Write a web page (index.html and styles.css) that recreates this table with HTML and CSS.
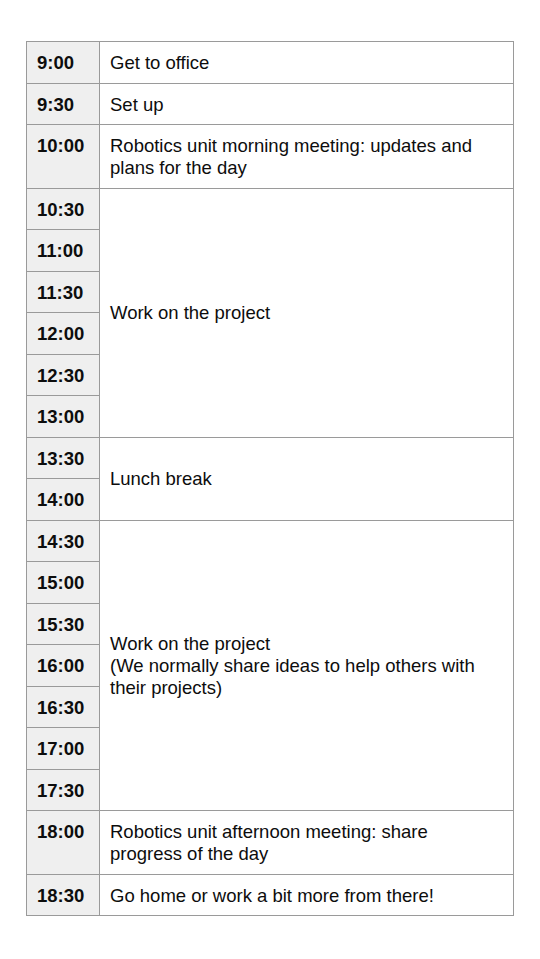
FILE: index.html
```html
<!DOCTYPE html>
<html>
<head>
<meta charset="utf-8">
<link rel="stylesheet" href="styles.css">
</head>
<body>
<table class="schedule">
  <colgroup><col class="c-time"><col class="c-desc"></colgroup>
  <tr><td class="time">9:00</td><td class="desc">Get to office</td></tr>
  <tr><td class="time">9:30</td><td class="desc">Set up</td></tr>
  <tr><td class="time">10:00</td><td class="desc">Robotics unit morning meeting: updates and plans for the day</td></tr>
  <tr><td class="time">10:30</td><td class="desc" rowspan="6">Work on the project</td></tr>
  <tr><td class="time">11:00</td></tr>
  <tr><td class="time">11:30</td></tr>
  <tr><td class="time">12:00</td></tr>
  <tr><td class="time">12:30</td></tr>
  <tr><td class="time">13:00</td></tr>
  <tr><td class="time">13:30</td><td class="desc" rowspan="2">Lunch break</td></tr>
  <tr><td class="time">14:00</td></tr>
  <tr><td class="time">14:30</td><td class="desc" rowspan="7">Work on the project<br>(We normally share ideas to help others with their projects)</td></tr>
  <tr><td class="time">15:00</td></tr>
  <tr><td class="time">15:30</td></tr>
  <tr><td class="time">16:00</td></tr>
  <tr><td class="time">16:30</td></tr>
  <tr><td class="time">17:00</td></tr>
  <tr><td class="time">17:30</td></tr>
  <tr><td class="time">18:00</td><td class="desc">Robotics unit afternoon meeting: share progress of the day</td></tr>
  <tr><td class="time">18:30</td><td class="desc">Go home or work a bit more from there!</td></tr>
</table>
</body>
</html>
```
FILE: styles.css
```css
html, body {
  margin: 0;
  padding: 0;
  background: #ffffff;
}
body {
  padding: 41px 0 0 26px;
  font-family: "Liberation Sans", Arial, sans-serif;
  font-size: 18.5px;
  color: #0d0d0d;
}
.schedule {
  border-collapse: collapse;
  width: 488px;
  table-layout: fixed;
}
.c-time { width: 73px; }
.schedule td {
  border: 1px solid #9a9a9a;
  padding: 10px 10px 8.5px;
  line-height: 22px;
}
.time {
  background: #efefef;
  font-weight: bold;
  vertical-align: top;
}
.desc {
  padding-right: 16px;
  vertical-align: middle;
}
```
